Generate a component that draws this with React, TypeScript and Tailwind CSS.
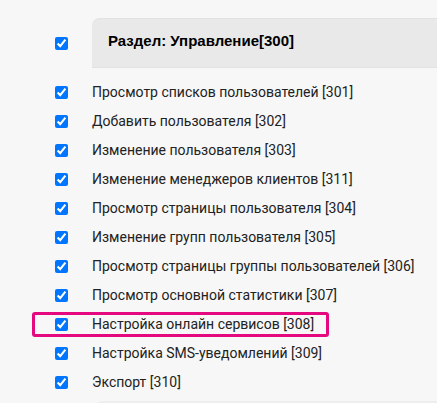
const items = [
  "Просмотр списков пользователей [301]",
  "Добавить пользователя [302]",
  "Изменение пользователя [303]",
  "Изменение менеджеров клиентов [311]",
  "Просмотр страницы пользователя [304]",
  "Изменение групп пользователя [305]",
  "Просмотр страницы группы пользователей [306]",
  "Просмотр основной статистики [307]",
  "Настройка онлайн сервисов [308]",
  "Настройка SMS-уведомлений [309]",
  "Экспорт [310]",
];

export default function App() {
  return (
    <div className="min-h-[403px] overflow-hidden bg-[#f7f7f7] pt-[18px] font-['Roboto',sans-serif]">
      <div className="flex items-center">
        <div className="flex w-[92px] items-center pl-[55px]">
          <input type="checkbox" defaultChecked className="h-[13px] w-[13px]" />
        </div>
        <div className="flex h-[50px] flex-1 items-center rounded-tl-lg border-y border-[#e2e2e2] bg-[#e9e9e9] pb-1 pl-4">
          <span className="font-['Liberation_Sans',sans-serif] text-[15px] font-bold text-black">
            Раздел: Управление[300]
          </span>
        </div>
      </div>

      <ul className="mt-[10px]">
        {items.map((label, i) => (
          <li key={label} className="relative flex h-[29px] items-center">
            <div className="flex w-[92px] items-center pl-[55px]">
              <input type="checkbox" defaultChecked className="h-[13px] w-[13px]" />
            </div>
            <span className="text-[14px] text-[#222]">{label}</span>
            {i === 8 && (
              <div className="absolute left-[32px] top-[2px] h-[25px] w-[297px] rounded-[3px] border-[3px] border-[#e5097f]" />
            )}
          </li>
        ))}
      </ul>

      <div className="ml-[96px] mt-[4px] h-[6px] rounded-tl-md bg-[#eeeeee]" />
    </div>
  );
}
